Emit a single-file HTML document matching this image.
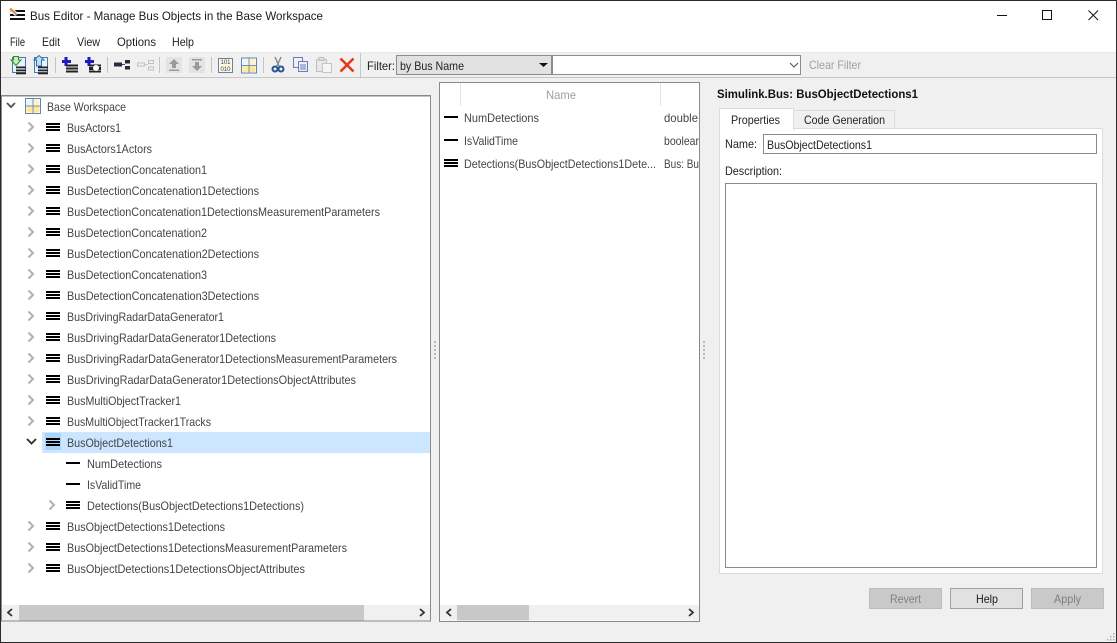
<!DOCTYPE html>
<html><head><meta charset="utf-8"><title>Bus Editor</title>
<style>
html,body{margin:0;padding:0;width:1117px;height:643px;overflow:hidden;background:#f0f0f0}
svg{display:block}
text{font-family:"Liberation Sans",sans-serif;font-size:12px;fill:#444;white-space:pre}
.k{fill:#1a1a1a}
.d{fill:#222}
.g{fill:#a0a0a0}
.s{fill:none;stroke:#555;stroke-width:1.9}
</style></head><body>
<svg xmlns="http://www.w3.org/2000/svg" width="1117" height="643" viewBox="0 0 1117 643">
<defs>
<g id="b"><rect x="0" y="-5" width="14" height="2" fill="#000"/><rect x="0" y="-2" width="14" height="2" fill="#000"/><rect x="0" y="1" width="14" height="2" fill="#000"/></g>
<path id="r" d="M-2.500 -5.500 L2 -1 L-2.500 3.500" fill="none" stroke="#b0b0b0" stroke-width="2"/>
<g id="grid"><rect x="0.500" y="0.500" width="15" height="15" fill="#fff" stroke="#5f86ad"/><rect x="1.500" y="1.500" width="6" height="6" fill="#eef4fb"/><rect x="8.500" y="1.500" width="6" height="6" fill="#fff3c8"/><rect x="1.500" y="8.500" width="6" height="6" fill="#ffe9a0"/><rect x="8.500" y="8.500" width="6" height="6" fill="#ffe39a"/><path d="M8 1V15M1 8H15" stroke="#7795b3"/></g>
<g id="doc"><rect x="2.500" y="2.500" width="13" height="15" fill="#eaf3fc" stroke="#4c7ba8"/><rect x="6" y="11.500" width="10" height="1.800" fill="#222"/><rect x="6" y="14.500" width="10" height="1.800" fill="#222"/><rect x="6" y="17.500" width="10" height="1.800" fill="#222"/></g>
</defs>

<!-- window base -->
<rect width="1117" height="643" fill="#f0f0f0"/>
<rect x="0" y="0" width="1117" height="53" fill="#fff"/>
<rect x="0" y="52" width="1117" height="1" fill="#e8e8e8"/>
<rect x="0" y="77" width="1117" height="1" fill="#c6c6c6"/>
<rect x="0" y="53" width="361" height="24" fill="#f0f0f0"/>

<!-- title bar -->
<rect x="10" y="10" width="15" height="2" fill="#111"/><rect x="10" y="14" width="15" height="2" fill="#111"/><rect x="10" y="18" width="15" height="2" fill="#111"/>
<path d="M10 8.500L16.500 14.500" stroke="#fff" stroke-width="4"/>
<path d="M10 8.500L15 13" stroke="#d9964a" stroke-width="2.400"/><path d="M15 13L17 15" stroke="#8a8a8a" stroke-width="1.600"/>
<text x="30" y="20" class="k" textLength="293" lengthAdjust="spacingAndGlyphs">Bus Editor - Manage Bus Objects in the Base Workspace</text>
<rect x="997" y="15" width="10" height="1" fill="#111"/>
<rect x="1042.500" y="10.500" width="9" height="9" fill="none" stroke="#111"/>
<path d="M1088.500 10.500L1098 20M1098 10.500L1088.500 20" stroke="#111" fill="none"/>

<!-- menu -->
<text x="10" y="46" class="d" textLength="15" lengthAdjust="spacingAndGlyphs">File</text>
<text x="42" y="46" class="d" textLength="18" lengthAdjust="spacingAndGlyphs">Edit</text>
<text x="77" y="46" class="d" textLength="23" lengthAdjust="spacingAndGlyphs">View</text>
<text x="117" y="46" class="d" textLength="39" lengthAdjust="spacingAndGlyphs">Options</text>
<text x="172" y="46" class="d" textLength="22" lengthAdjust="spacingAndGlyphs">Help</text>

<!-- toolbar -->
<g transform="translate(10,55)"><use href="#doc"/><path d="M3.500 1.500H8.500V5H11L6 10.500L1 5H3.500Z" fill="#c6efb8" stroke="#2f8a2f"/></g>
<g transform="translate(32,55)"><use href="#doc"/><path d="M4.500 11V5H2L7 0.500L12 5H9.500V11Z" fill="#c3dff5" stroke="#2a6fb0"/></g>
<rect x="55" y="57" width="1" height="16" fill="#c4c4c4"/>
<path d="M66 57V66M62 61.500H71" stroke="#1c1cc0" stroke-width="3"/>
<rect x="66" y="64.500" width="12" height="2" fill="#222"/><rect x="66" y="67.500" width="12" height="2" fill="#222"/><rect x="66" y="70.500" width="12" height="2" fill="#222"/>
<path d="M89 57V66M85 61.500H94" stroke="#1c1cc0" stroke-width="3"/>
<rect x="89" y="64.500" width="12" height="2" fill="#222"/><rect x="89" y="67" width="12" height="3" fill="#222"/><rect x="89" y="70.500" width="12" height="2" fill="#222"/><circle cx="96" cy="68" r="3" fill="#fff"/>
<rect x="107" y="57" width="1" height="16" fill="#c4c4c4"/>
<rect x="114" y="62.500" width="8" height="4" fill="#2a2a3a"/><path d="M122 64.500H125" stroke="#447"/><rect x="125" y="60" width="5" height="3.500" fill="#2a2a3a"/><rect x="125" y="66" width="5" height="3.500" fill="#2a2a3a"/>
<rect x="137.500" y="63" width="7" height="3" fill="none" stroke="#c0c0c0"/><path d="M144 64.500H148" stroke="#c8c8c8"/><rect x="148.500" y="60.500" width="5" height="3" fill="none" stroke="#c0c0c0"/><rect x="148.500" y="67" width="5" height="3" fill="none" stroke="#c0c0c0"/>
<rect x="159" y="57" width="1" height="16" fill="#c4c4c4"/>
<rect x="166" y="57" width="16" height="16" fill="#e3e3e3"/>
<path d="M174 59L179 64H176V68H172V64H169Z" fill="#9a9a9a"/><rect x="169" y="69.500" width="10" height="1.500" fill="#9a9a9a"/>
<rect x="189" y="57" width="16" height="16" fill="#e3e3e3"/>
<path d="M197 71L202 66H199V62H195V66H192Z" fill="#9a9a9a"/><rect x="192" y="59" width="10" height="1.500" fill="#9a9a9a"/>
<rect x="211" y="57" width="1" height="16" fill="#c4c4c4"/>
<rect x="218.500" y="58.500" width="14" height="14" fill="#fff8dc" stroke="#5f86ad"/>
<text x="220.500" y="64" style="font-size:6px;fill:#345" textLength="10" lengthAdjust="spacingAndGlyphs">101</text>
<text x="220.500" y="71" style="font-size:6px;fill:#345" textLength="10" lengthAdjust="spacingAndGlyphs">010</text>
<use href="#grid" x="241" y="57.500"/>
<rect x="263" y="57" width="1" height="16" fill="#c4c4c4"/>
<path d="M275 57L279 66M281 57L277 66" stroke="#8a8a8a" stroke-width="1.500"/><circle cx="275" cy="69" r="2.500" fill="none" stroke="#27548f" stroke-width="2"/><circle cx="281" cy="69" r="2.500" fill="none" stroke="#27548f" stroke-width="2"/>
<rect x="293.500" y="57.500" width="9" height="10" fill="#eef" stroke="#6a7fb0"/><rect x="298.500" y="61.500" width="9" height="10" fill="#eef" stroke="#6a7fb0"/><path d="M300 65H306M300 67H306M300 69H306" stroke="#6a7fb0"/>
<rect x="316.500" y="59.500" width="10" height="12" fill="#e8e8e8" stroke="#c0c0c0"/><rect x="319" y="57.500" width="5" height="3" fill="#ddd" stroke="#c0c0c0"/><rect x="322.500" y="63.500" width="9" height="9" fill="#f5f5f5" stroke="#c4c4c4"/>
<path d="M340.500 58.500L353.500 71.500M353.500 58.500L340.500 71.500" stroke="#e5391a" stroke-width="2.600"/>
<rect x="360" y="53" width="1" height="24" fill="#c6c6c6"/>

<!-- filter -->
<text x="367" y="70" class="d" textLength="28" lengthAdjust="spacingAndGlyphs">Filter:</text>
<rect x="396.500" y="55.500" width="155" height="19" fill="#e1e1e1" stroke="#8c8c8c"/>
<text x="400" y="70" class="d" textLength="64" lengthAdjust="spacingAndGlyphs">by Bus Name</text>
<path d="M539 63H548L543.500 67Z" fill="#111"/>
<rect x="552.500" y="55.500" width="248" height="19" fill="#fff" stroke="#8c8c8c"/>
<path d="M790 63L794 67L798 63" fill="none" stroke="#555" stroke-width="1.100"/>
<text x="809" y="69" class="g" textLength="52" lengthAdjust="spacingAndGlyphs">Clear Filter</text>

<!-- tree panel -->
<rect x="1.500" y="95.500" width="429" height="525.500" fill="#fff" stroke="#8a8a8a"/>
<rect x="1" y="95" width="430" height="1.500" fill="#8a8a8a"/>
<rect x="42" y="432" width="388" height="21" fill="#cce6ff"/>
<rect x="45" y="433" width="16" height="17" fill="#a9d4f7"/>
<path d="M7 103L11 107L15 103" class="s"/>
<use href="#grid" x="25" y="98"/>
<text x="47" y="111" textLength="79" lengthAdjust="spacingAndGlyphs">Base Workspace</text>

<use href="#r" x="31" y="128"/><use href="#b" x="46" y="128"/><text x="67" y="132" textLength="54" lengthAdjust="spacingAndGlyphs">BusActors1</text>
<use href="#r" x="31" y="149"/><use href="#b" x="46" y="149"/><text x="67" y="153" textLength="85" lengthAdjust="spacingAndGlyphs">BusActors1Actors</text>
<use href="#r" x="31" y="170"/><use href="#b" x="46" y="170"/><text x="67" y="174" textLength="140" lengthAdjust="spacingAndGlyphs">BusDetectionConcatenation1</text>
<use href="#r" x="31" y="191"/><use href="#b" x="46" y="191"/><text x="67" y="195" textLength="192" lengthAdjust="spacingAndGlyphs">BusDetectionConcatenation1Detections</text>
<use href="#r" x="31" y="212"/><use href="#b" x="46" y="212"/><text x="67" y="216" textLength="313" lengthAdjust="spacingAndGlyphs">BusDetectionConcatenation1DetectionsMeasurementParameters</text>
<use href="#r" x="31" y="233"/><use href="#b" x="46" y="233"/><text x="67" y="237" textLength="140" lengthAdjust="spacingAndGlyphs">BusDetectionConcatenation2</text>
<use href="#r" x="31" y="254"/><use href="#b" x="46" y="254"/><text x="67" y="258" textLength="192" lengthAdjust="spacingAndGlyphs">BusDetectionConcatenation2Detections</text>
<use href="#r" x="31" y="275"/><use href="#b" x="46" y="275"/><text x="67" y="279" textLength="140" lengthAdjust="spacingAndGlyphs">BusDetectionConcatenation3</text>
<use href="#r" x="31" y="296"/><use href="#b" x="46" y="296"/><text x="67" y="300" textLength="192" lengthAdjust="spacingAndGlyphs">BusDetectionConcatenation3Detections</text>
<use href="#r" x="31" y="317"/><use href="#b" x="46" y="317"/><text x="67" y="321" textLength="157" lengthAdjust="spacingAndGlyphs">BusDrivingRadarDataGenerator1</text>
<use href="#r" x="31" y="338"/><use href="#b" x="46" y="338"/><text x="67" y="342" textLength="209" lengthAdjust="spacingAndGlyphs">BusDrivingRadarDataGenerator1Detections</text>
<use href="#r" x="31" y="359"/><use href="#b" x="46" y="359"/><text x="67" y="363" textLength="330" lengthAdjust="spacingAndGlyphs">BusDrivingRadarDataGenerator1DetectionsMeasurementParameters</text>
<use href="#r" x="31" y="380"/><use href="#b" x="46" y="380"/><text x="67" y="384" textLength="289" lengthAdjust="spacingAndGlyphs">BusDrivingRadarDataGenerator1DetectionsObjectAttributes</text>
<use href="#r" x="31" y="401"/><use href="#b" x="46" y="401"/><text x="67" y="405" textLength="114" lengthAdjust="spacingAndGlyphs">BusMultiObjectTracker1</text>
<use href="#r" x="31" y="422"/><use href="#b" x="46" y="422"/><text x="67" y="426" textLength="144" lengthAdjust="spacingAndGlyphs">BusMultiObjectTracker1Tracks</text>
<path d="M27 439L31.500 443.500L36 439" fill="none" stroke="#333" stroke-width="1.900"/><use href="#b" x="46" y="443"/><text x="67" y="447" textLength="106" lengthAdjust="spacingAndGlyphs">BusObjectDetections1</text>
<rect x="66" y="462" width="14" height="2" fill="#000"/><text x="87" y="468" textLength="75" lengthAdjust="spacingAndGlyphs">NumDetections</text>
<rect x="66" y="483" width="14" height="2" fill="#000"/><text x="87" y="489" textLength="54" lengthAdjust="spacingAndGlyphs">IsValidTime</text>
<use href="#r" x="52" y="506"/><use href="#b" x="66" y="506"/><text x="87" y="510" textLength="217" lengthAdjust="spacingAndGlyphs">Detections(BusObjectDetections1Detections)</text>
<use href="#r" x="31" y="527"/><use href="#b" x="46" y="527"/><text x="67" y="531" textLength="158" lengthAdjust="spacingAndGlyphs">BusObjectDetections1Detections</text>
<use href="#r" x="31" y="548"/><use href="#b" x="46" y="548"/><text x="67" y="552" textLength="280" lengthAdjust="spacingAndGlyphs">BusObjectDetections1DetectionsMeasurementParameters</text>
<use href="#r" x="31" y="569"/><use href="#b" x="46" y="569"/><text x="67" y="573" textLength="238" lengthAdjust="spacingAndGlyphs">BusObjectDetections1DetectionsObjectAttributes</text>

<!-- tree scrollbar -->
<rect x="2" y="605" width="428" height="15.500" fill="#f0f0f0"/>
<rect x="19" y="605" width="345" height="15.500" fill="#c8c8c8"/>
<path d="M12 609L8 612.500L12 616" fill="none" stroke="#333" stroke-width="1.800"/>
<path d="M420 609L424 612.500L420 616" fill="none" stroke="#333" stroke-width="1.800"/>

<!-- sash grips -->
<g fill="#b8b8b8"><rect x="434" y="341" width="2" height="2"/><rect x="434" y="345" width="2" height="2"/><rect x="434" y="349" width="2" height="2"/><rect x="434" y="353" width="2" height="2"/><rect x="434" y="357" width="2" height="2"/>
<rect x="703" y="341" width="2" height="2"/><rect x="703" y="345" width="2" height="2"/><rect x="703" y="349" width="2" height="2"/><rect x="703" y="353" width="2" height="2"/><rect x="703" y="357" width="2" height="2"/></g>

<!-- centre table -->
<rect x="439.500" y="82.500" width="260" height="539" fill="#fff" stroke="#8a8a8a"/>
<rect x="460" y="83" width="1" height="23" fill="#e6e0e0"/>
<rect x="660" y="83" width="1" height="23" fill="#e6e0e0"/>
<text x="546" y="99" class="g" textLength="30" lengthAdjust="spacingAndGlyphs">Name</text>
<rect x="444" y="116" width="14" height="2" fill="#000"/>
<text x="464" y="122" textLength="75" lengthAdjust="spacingAndGlyphs">NumDetections</text>
<text x="664" y="122" textLength="34" lengthAdjust="spacingAndGlyphs">double</text>
<rect x="444" y="139" width="14" height="2" fill="#000"/>
<text x="464" y="145" textLength="54" lengthAdjust="spacingAndGlyphs">IsValidTime</text>
<text x="664" y="145" textLength="35" lengthAdjust="spacingAndGlyphs">boolear</text>
<use href="#b" x="444" y="164"/>
<text x="464" y="168" textLength="192" lengthAdjust="spacingAndGlyphs">Detections(BusObjectDetections1Dete...</text>
<text x="664" y="168" textLength="35" lengthAdjust="spacingAndGlyphs">Bus: Bu</text>
<rect x="440" y="605" width="259" height="15.500" fill="#f0f0f0"/>
<rect x="457" y="605" width="72" height="15.500" fill="#c8c8c8"/>
<path d="M451 609L447 612.500L451 616" fill="none" stroke="#333" stroke-width="1.800"/>
<path d="M689 609L693 612.500L689 616" fill="none" stroke="#333" stroke-width="1.800"/>

<!-- right panel -->
<text x="717" y="98" style="font-weight:bold;fill:#111" textLength="201" lengthAdjust="spacingAndGlyphs">Simulink.Bus: BusObjectDetections1</text>
<rect x="719.500" y="128.500" width="383" height="445" fill="#fff" stroke="#dcdcdc"/>
<rect x="793.500" y="110.500" width="101" height="18" fill="#f0f0f0" stroke="#dcdcdc"/>
<rect x="719.500" y="108.500" width="74" height="21" fill="#fff" stroke="#dcdcdc"/>
<rect x="720" y="127" width="73" height="3" fill="#fff"/>
<text x="731" y="124" class="d" textLength="49" lengthAdjust="spacingAndGlyphs">Properties</text>
<text x="804" y="124" class="d" textLength="81" lengthAdjust="spacingAndGlyphs">Code Generation</text>
<text x="725" y="148" class="d" textLength="32" lengthAdjust="spacingAndGlyphs">Name:</text>
<rect x="763.500" y="134.500" width="333" height="19" fill="#fff" stroke="#8a8a8a"/>
<text x="767" y="149" class="d" textLength="105" lengthAdjust="spacingAndGlyphs">BusObjectDetections1</text>
<text x="725" y="175" class="d" textLength="57" lengthAdjust="spacingAndGlyphs">Description:</text>
<rect x="725.500" y="183.500" width="371" height="384" fill="#fff" stroke="#8a8a8a"/>

<!-- buttons -->
<rect x="869.500" y="588.500" width="72" height="20" fill="#c9c9c9" stroke="#bcbcbc"/>
<text x="890" y="603" style="fill:#808080" textLength="31" lengthAdjust="spacingAndGlyphs">Revert</text>
<rect x="950.500" y="588.500" width="72" height="20" fill="#e1e1e1" stroke="#a0a0a0"/>
<text x="976" y="603" class="k" textLength="22" lengthAdjust="spacingAndGlyphs">Help</text>
<rect x="1031.500" y="588.500" width="72" height="20" fill="#c9c9c9" stroke="#bcbcbc"/>
<text x="1054" y="603" style="fill:#808080" textLength="27" lengthAdjust="spacingAndGlyphs">Apply</text>

<!-- resize grip -->
<g fill="#b0b0b0"><rect x="1113" y="633" width="1.500" height="1.500"/><rect x="1113" y="636" width="1.500" height="1.500"/><rect x="1113" y="639" width="1.500" height="1.500"/><rect x="1110" y="636" width="1.500" height="1.500"/><rect x="1110" y="639" width="1.500" height="1.500"/><rect x="1107" y="639" width="1.500" height="1.500"/></g>

<!-- outer border -->
<rect x="0.500" y="0.500" width="1116" height="642" fill="none" stroke="#2a2a2a"/>
</svg>
</body></html>
